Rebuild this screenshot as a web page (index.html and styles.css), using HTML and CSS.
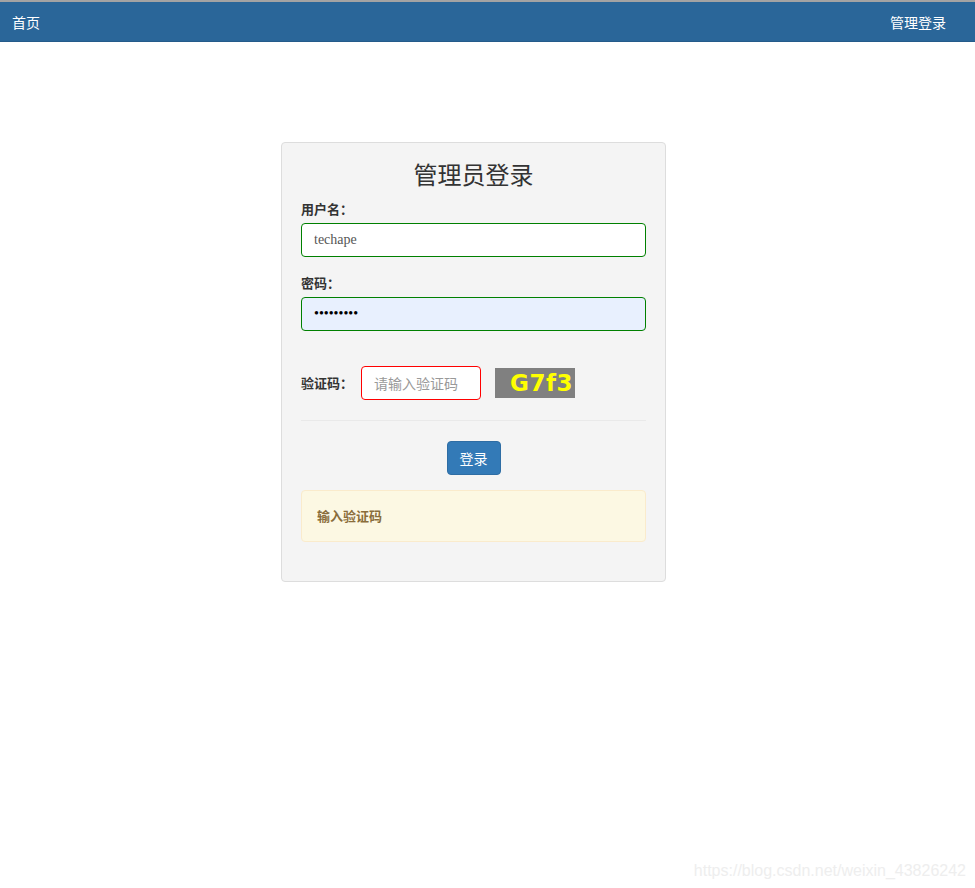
FILE: index.html
```html
<!DOCTYPE html>
<html lang="zh">
<head>
<meta charset="utf-8">
<title>管理员登录</title>
<link rel="stylesheet" href="styles.css">
</head>
<body>
<nav class="navbar">
  <a class="nav-link" href="#">首页</a>
  <a class="nav-link" href="#">管理登录</a>
</nav>
<main class="page">
  <form class="panel">
    <h3 class="title">管理员登录</h3>
    <label class="label">用户名：</label>
    <input class="field field-ok" type="text" value="techape">
    <label class="label label-gap">密码：</label>
    <input class="field field-ok field-filled" type="password" value="123456789">
    <div class="captcha-row">
      <label class="label captcha-label">验证码：</label>
      <input class="field field-err captcha-input" type="text" placeholder="请输入验证码">
      <div class="captcha-img">G7f3</div>
    </div>
    <hr class="divider">
    <div class="actions">
      <button class="btn" type="button">登录</button>
    </div>
    <div class="alert">输入验证码</div>
  </form>
</main>
<div class="watermark">https://blog.csdn.net/weixin_43826242</div>
</body>
</html>
```
FILE: styles.css
```css
html, body {
  margin: 0;
  padding: 0;
  background: #fff;
}
body {
  font-family: "Liberation Serif", "Noto Sans CJK SC", serif;
  font-size: 14px;
  color: #333;
  height: 888px;
  position: relative;
  overflow: hidden;
}
.navbar {
  height: 39px;
  border-top: 2px solid #a3a3a3;
  border-bottom: 1px solid #255b8a;
  background: #2a6699;
  display: flex;
  justify-content: space-between;
  align-items: center;
  padding: 0 29px 0 12px;
}
.nav-link {
  color: #fff;
  text-decoration: none;
  font-family: "Noto Sans CJK SC", sans-serif;
  font-size: 14px;
  line-height: 20px;
}
.page {
  padding-top: 100px;
  padding-left: 281px;
}
.panel {
  width: 345px;
  border: 1px solid #dddddd;
  border-radius: 4px;
  background: #f4f4f4;
  padding: 14px 19px 39px 19px;
  display: flex;
  flex-direction: column;
}
.title {
  margin: -1px 0 7px 0;
  text-align: center;
  font-family: "Noto Sans CJK SC", sans-serif;
  font-weight: 400;
  font-size: 24px;
  line-height: 36px;
  color: #333;
}
.label {
  font-family: "Noto Sans CJK SC", serif;
  font-weight: 700;
  font-size: 13px;
  line-height: 20px;
  color: #333;
  margin-bottom: 4px;
}
.label-gap {
  margin-top: 16px;
}
.field {
  box-sizing: border-box;
  height: 34px;
  width: 100%;
  padding: 6px 12px;
  border-radius: 4px;
  background: #fff;
  font-family: "Liberation Serif", serif;
  font-size: 14px;
  color: #555;
  outline: none;
  margin: 0;
}
.field-ok {
  border: 1px solid #008000;
}
.field-filled {
  background: #e8f0fe;
  color: #000;
}
.field-err {
  border: 1px solid #ff0000;
}
.captcha-row {
  margin-top: 35px;
  display: flex;
  align-items: center;
}
.captcha-label {
  margin: 0 8px 0 0;
  width: 52px;
  white-space: nowrap;
}
.captcha-input {
  width: 120px;
  font-family: "Noto Sans CJK SC", sans-serif;
}
.captcha-input::placeholder {
  color: #999;
}
.captcha-img {
  margin-left: 14px;
  width: 80px;
  height: 30px;
  box-sizing: border-box;
  background: #808080;
  color: #ffff00;
  font-family: "DejaVu Sans", sans-serif;
  font-weight: 700;
  font-size: 23px;
  line-height: 30px;
  padding-left: 15px;
  letter-spacing: 0.5px;
}
.divider {
  width: 100%;
  margin: 20px 0 20px 0;
  border: 0;
  border-top: 1px solid #e9e9e9;
  height: 0;
}
.actions {
  display: flex;
  justify-content: center;
}
.btn {
  height: 34px;
  width: 54px;
  padding: 0;
  border: 1px solid #2e6da4;
  border-radius: 4px;
  background: #337ab7;
  color: #fff;
  font-family: "Noto Sans CJK SC", sans-serif;
  font-size: 14px;
  line-height: 20px;
}
.alert {
  margin-top: 15px;
  padding: 15px;
  border: 1px solid #faebcc;
  border-radius: 4px;
  background: #fcf8e3;
  color: #8a6d3b;
  font-family: "Noto Sans CJK SC", serif;
  font-weight: 700;
  font-size: 13px;
  line-height: 20px;
}
.watermark {
  position: absolute;
  right: 9px;
  bottom: 8px;
  font-family: "Liberation Sans", sans-serif;
  font-size: 16px;
  color: #eeeeee;
}
```
